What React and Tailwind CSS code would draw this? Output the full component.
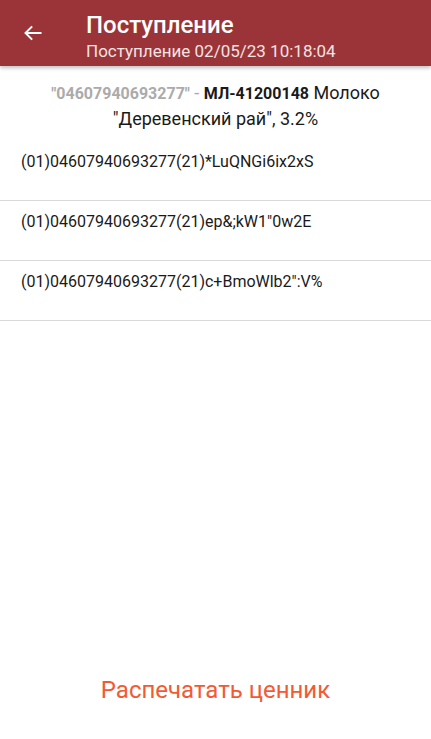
import React from "react";

const codes = [
  "(01)04607940693277(21)*LuQNGi6ix2xS",
  "(01)04607940693277(21)ep&;kW1\"0w2E",
  "(01)04607940693277(21)c+BmoWlb2\":V%",
];

export default function App() {
  return (
    <div className="w-[431px] h-[739px] bg-white flex flex-col overflow-hidden" style={{ fontFamily: "Roboto, 'Noto Sans', sans-serif" }}>
      <div className="h-[66px] bg-[#9b3438] flex items-start shrink-0 shadow-[0_2px_4px_rgba(0,0,0,0.25)] relative z-10">
        <div className="w-[86px] h-full flex items-center justify-center pr-[20px]">
          <svg width="20" height="20" viewBox="0 0 24 24" fill="none" stroke="white" strokeWidth="2.4" strokeLinecap="square">
            <path d="M21 12H4" />
            <path d="M11 4l-8 8 8 8" strokeLinecap="butt" />
          </svg>
        </div>
        <div className="flex flex-col text-white pt-[11px]">
          <div className="text-[24px] leading-[28px] font-medium">Поступление</div>
          <div className="text-[17px] leading-[22px] mt-[1px] text-[#f3e3e3]">Поступление 02/05/23 10:18:04</div>
        </div>
      </div>
      <div className="pt-[14px] px-[16px] text-center text-[18px] leading-[25px] text-[#1a1a1a]">
        <span className="text-[#ababab] font-bold text-[16px]">"04607940693277"</span>
        <span className="text-[#ababab]"> - </span>
        <span className="font-bold text-[16px]">МЛ-41200148</span> Молоко "Деревенский рай", 3.2%
      </div>
      <div className="flex flex-col mt-[10px]">
        {codes.map((c) => (
          <div key={c} className="h-[60px] border-b border-[#d9d9d9] px-[21px] pt-[9px] text-[16px] leading-[24px] text-[#1a1a1a]">
            {c}
          </div>
        ))}
      </div>
      <div className="flex-1" />
      <div className="h-[70px] flex items-start justify-center pt-[6px]">
        <span className="text-[24px] leading-[30px] text-[#f25a36]">Распечатать ценник</span>
      </div>
    </div>
  );
}
